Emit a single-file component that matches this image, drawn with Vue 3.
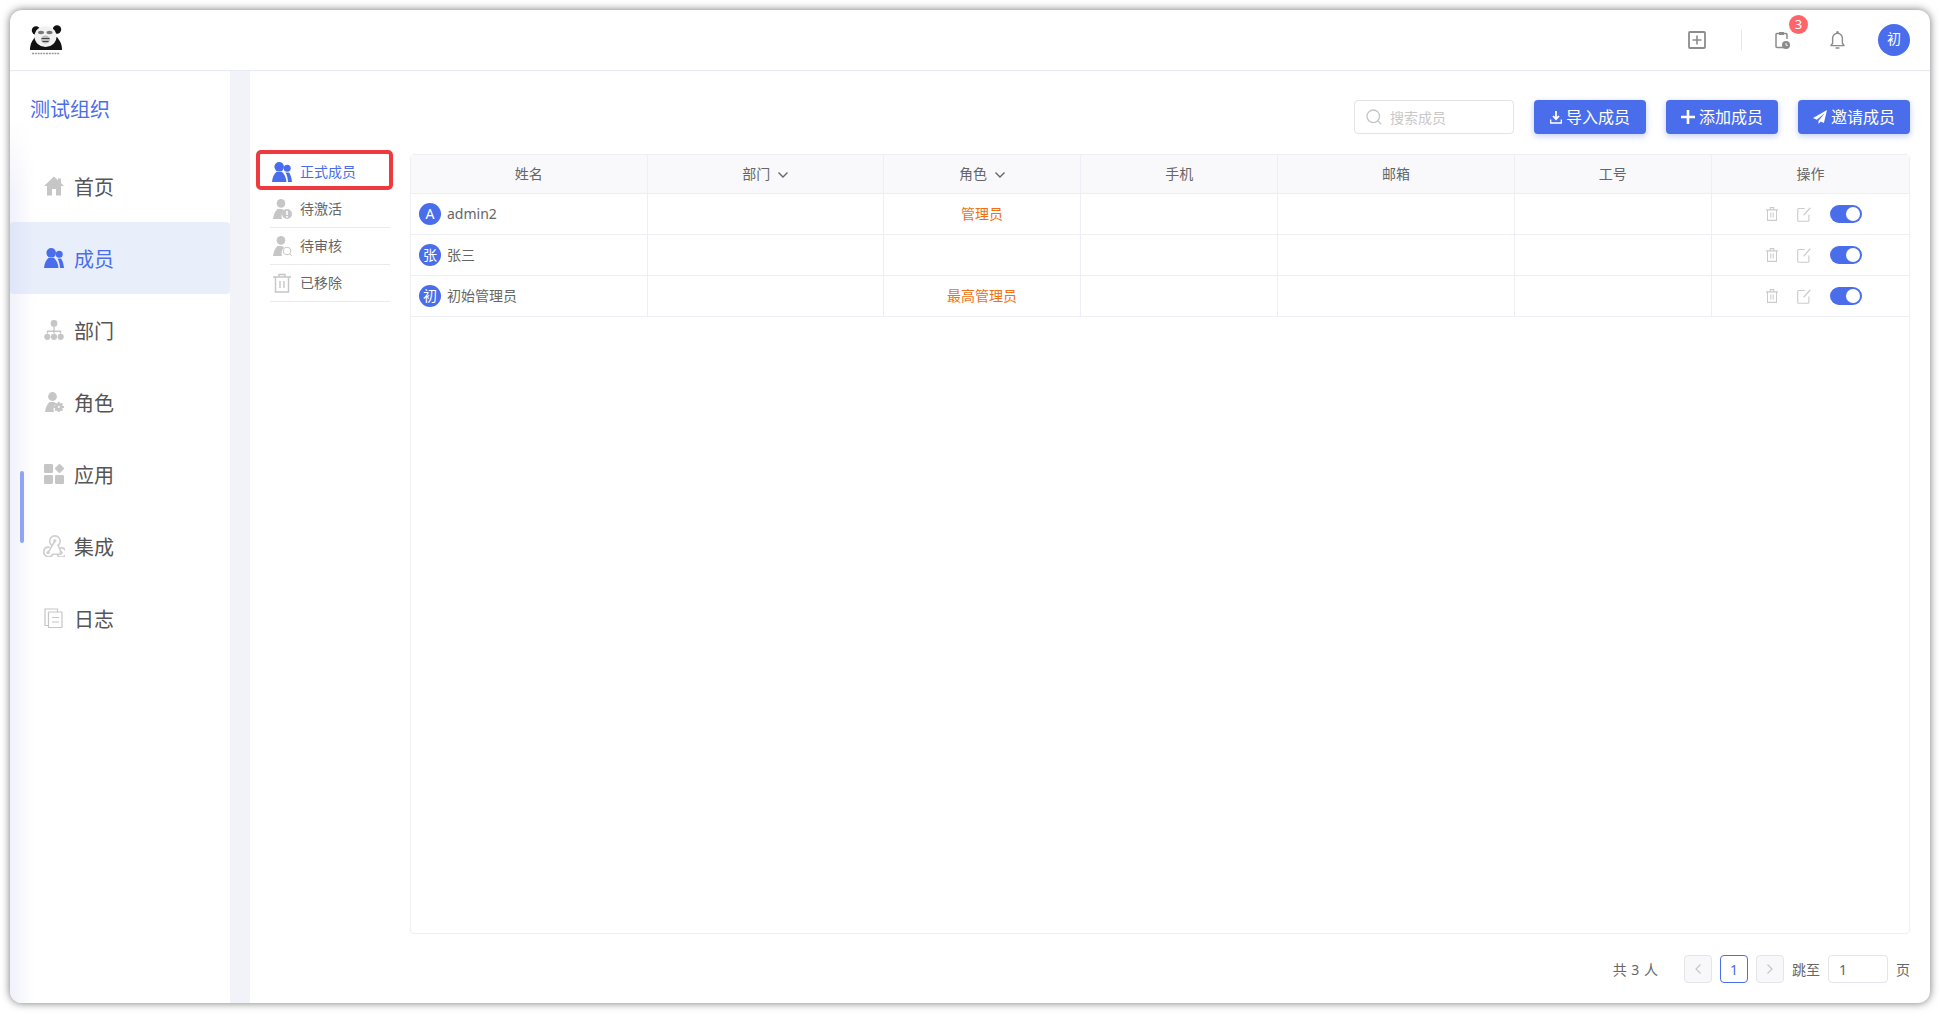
<script setup>
const person = 'M1 20C1.500 15.500 3 12.500 5.500 10h4.500c.8.5 1.500 1 2 1.500-2.300 2-3 5.800-2 8.500z'
const icons = {
  home: '<path d="M10 .5 0 10h3v9.500h5V13h4v6.500h5V10h3l-3-2.900V2.500h-3v1.700z"/>',
  people: '<circle cx="7.200" cy="4.800" r="4.800"/><path d="M0 20C.4 15.500 2 12 4.500 9.800h5.400c2.500 2.200 4.200 5.700 4.600 10.200z"/><circle cx="15.200" cy="6.200" r="3.500"/><path d="M13.500 10.500h3.600c1.600 2.300 2.600 5.700 2.900 9.500h-4c-.2-3.600-1-7-2.500-9.500z"/>',
  org: '<circle cx="10" cy="3.400" r="3.400"/><path d="M9.300 6.500h1.400v4h6.500v3h-1.400v-1.600h-5.100v1.600H9.300v-1.600H4.200v1.600H2.800v-3h6.500z"/><circle cx="3.300" cy="16.800" r="3.100"/><circle cx="10" cy="16.800" r="3.100"/><circle cx="16.700" cy="16.800" r="3.100"/>',
  role: '<circle cx="8.500" cy="4.500" r="4.400"/><path d="' + person + '"/><circle cx="14.800" cy="15" r="3.900"/><g stroke="currentColor" stroke-width="2"><path d="M14.800 9.800v10.400M9.600 15h10.400M11.200 11.400l7.200 7.200M18.400 11.400l-7.200 7.200"/></g><circle cx="14.800" cy="15" r="1" fill="#fff"/>',
  apps: '<rect x="0" y="0" width="9" height="9" rx="1.200"/><rect x="12" y="1" width="7" height="7" rx="1" transform="rotate(45 15.500 4.500)"/><rect x="0" y="11" width="9" height="9" rx="1.200"/><rect x="11" y="11" width="9" height="9" rx="1.200"/>',
  hook: '<g fill="none" stroke="currentColor" stroke-width="1.500" stroke-linecap="round"><path d="M7.800 9.300A4.800 4.800 0 1 1 13.800 9.300"/><path d="M10.800 5.300 4.600 16"/><path d="M5.500 11A4.400 4.400 0 1 0 8.900 17.500H16.500"/><path d="M13.500 18.600A4.200 4.200 0 1 0 16 11.800"/><path d="M13.800 9.300 16.500 16"/></g><circle cx="10.800" cy="5.300" r="1.500"/><circle cx="4.600" cy="16" r="1.500"/><circle cx="16.500" cy="16" r="1.500"/>',
  log: '<g fill="none" stroke="currentColor" stroke-width="1.200"><path d="M4.500 17.500H1V1h12.500v3"/><rect x="4.500" y="4" width="13.500" height="15.500" rx=".6"/><path d="M8 9.500h7M8 14h7"/></g>',
  pending: '<circle cx="9" cy="4.400" r="4.300"/><path d="' + person + '"/><circle cx="15" cy="15" r="5"/><rect x="14.200" y="11.800" width="1.600" height="4.200" fill="#fff"/><rect x="14.200" y="17" width="1.600" height="1.600" fill="#fff"/>',
  review: '<circle cx="9" cy="4.400" r="4.300"/><path d="' + person + '"/><g fill="none" stroke="currentColor" stroke-width="1"><circle cx="15" cy="15" r="3.800"/><path d="m18 18 2 2"/></g>',
  trash: '<g fill="none" stroke="currentColor" stroke-width="1.400"><path d="M1 4h18M7 4V1.500h6V4M3.500 4v15h13V4"/><path d="M8 8v7M12 8v7"/></g>',
  optrash: '<g fill="none" stroke="currentColor" stroke-width="1.700"><path d="M0 4h20M7 4V1h6v3M2.500 4v15h15V4"/><path d="M8 8v7M12 8v7"/></g>',
  edit: '<g fill="none" stroke="currentColor" stroke-width="1.600"><path d="M11 2H2.500A1.500 1.500 0 0 0 1 3.500v14A1.500 1.500 0 0 0 2.500 19h13a1.500 1.500 0 0 0 1.500-1.500V10"/><path d="M19 1 9.500 11"/></g>'
}
const navs = [
  { icon: 'home', label: '首页' },
  { icon: 'people', label: '成员', active: true },
  { icon: 'org', label: '部门' },
  { icon: 'role', label: '角色' },
  { icon: 'apps', label: '应用' },
  { icon: 'hook', label: '集成' },
  { icon: 'log', label: '日志' }
]
const subs = [
  { icon: 'people', label: '正式成员', active: true },
  { icon: 'pending', label: '待激活' },
  { icon: 'review', label: '待审核' },
  { icon: 'trash', label: '已移除' }
]
const cols = [
  { label: '姓名' },
  { label: '部门', arrow: true },
  { label: '角色', arrow: true },
  { label: '手机' },
  { label: '邮箱' },
  { label: '工号' },
  { label: '操作' }
]
const rows = [
  { mark: 'A', name: 'admin2', role: '管理员' },
  { mark: '张', name: '张三', role: '' },
  { mark: '初', name: '初始管理员', role: '最高管理员' }
]
</script>

<template>
  <div class="page">
    <div class="window">
      <header class="topbar">
        <svg class="logo" viewBox="0 0 32 32" width="32" height="32">
          <circle cx="6" cy="6.500" r="4.200" fill="#111" />
          <circle cx="27" cy="5.500" r="4.200" fill="#111" />
          <path d="M0 26c0-6 2-9 5-13h22c3 4 5 7 5 13z" fill="#111" />
          <ellipse cx="15.500" cy="12.500" rx="11" ry="10.500" fill="#f1f1f1" />
          <ellipse cx="11" cy="8.500" rx="3" ry="1.700" fill="#777" />
          <ellipse cx="19.500" cy="8.500" rx="3" ry="1.700" fill="#777" />
          <ellipse cx="15.500" cy="15.500" rx="4.500" ry="4" fill="#bbb" />
          <path d="M11.500 14.500h8M12.500 17.500h6" stroke="#444" stroke-width="1" />
          <path d="M2 29.500h28" stroke="#999" stroke-width="1.600" stroke-dasharray="2 .8" />
        </svg>
        <div class="tools">
          <svg class="tool-plus" viewBox="0 0 18 18" width="18" height="18">
            <rect x="1" y="1" width="16" height="16" rx="1" fill="none" stroke="#8c8c8c" stroke-width="1.800" />
            <path d="M9 4.500v9M4.500 9h9" stroke="#8c8c8c" stroke-width="1.600" />
          </svg>
          <span class="tool-divider"></span>
          <span class="tool-task">
            <svg viewBox="0 0 15 18" width="15" height="18">
              <path d="M9 16.500H2A1 1 0 0 1 1 15.500V3.500a1 1 0 0 1 1-1h9a1 1 0 0 1 1 1V8" fill="none" stroke="#8c8c8c" stroke-width="1.500" />
              <rect x="4" y="1" width="5" height="3" fill="#8c8c8c" />
              <circle cx="11" cy="14" r="4" fill="#8c8c8c" />
              <path d="M11 12v2.300h1.800" fill="none" stroke="#fff" stroke-width=".9" />
            </svg>
            <span class="badge">3</span>
          </span>
          <svg class="tool-bell" viewBox="0 0 16 20" width="15" height="20">
            <path d="M1 16h14l-1.800-2.500V8A5.200 5.200 0 0 0 2.800 8v5.500z" fill="none" stroke="#8c8c8c" stroke-width="1.500" stroke-linejoin="round" />
            <circle cx="8" cy="1.800" r="1.300" fill="#8c8c8c" />
            <path d="M6 18.500h4" stroke="#8c8c8c" stroke-width="1.600" />
          </svg>
          <span class="avatar-top">初</span>
        </div>
      </header>

      <div class="frame">
        <aside class="sidebar">
          <div class="org">测试组织</div>
          <nav>
            <a v-for="n in navs" :key="n.label" class="nav-item" :class="{ on: n.active }">
              <svg class="nav-icon" :class="{ wide: n.icon === 'hook' }" viewBox="0 0 20 20" width="20" height="20" fill="currentColor" v-html="icons[n.icon]"></svg>
              <span>{{ n.label }}</span>
            </a>
          </nav>
          <span class="scroll-thumb"></span>
        </aside>
        <div class="band"></div>
        <main class="main">
          <div class="toolbar">
            <label class="search">
              <svg viewBox="0 0 16 16" width="16" height="16">
                <circle cx="7.300" cy="7.300" r="6.300" fill="none" stroke="#c4c4c4" stroke-width="1.300" />
                <path d="m12 12 3 3" stroke="#c4c4c4" stroke-width="1.300" />
              </svg>
              <input placeholder="搜索成员" />
            </label>
            <button class="btn">
              <svg viewBox="0 0 12 14" width="12" height="14">
                <path d="M6 1v7.500M3 6l3 3.200L9 6" fill="none" stroke="#fff" stroke-width="1.800" />
                <path d="M.7 9.500v3.500h10.600V9.500" fill="none" stroke="#fff" stroke-width="1.300" />
              </svg>
              <span class="lift">导入成员</span>
            </button>
            <button class="btn">
              <svg viewBox="0 0 14 14" width="14" height="14">
                <path d="M7 0v14M0 7h14" stroke="#fff" stroke-width="2.600" />
              </svg>
              <span class="lift">添加成员</span>
            </button>
            <button class="btn">
              <svg viewBox="0 0 14 14" width="14" height="14">
                <path d="M14 0 0 8l3.800 1.800L12 3 5.500 10.800V14l2.400-2.600 3 1.500z" fill="#fff" />
              </svg>
              <span class="lift">邀请成员</span>
            </button>
          </div>

          <div class="body">
            <ul class="subnav">
              <li v-for="s in subs" :key="s.label" class="sub-item" :class="{ on: s.active }">
                <svg viewBox="0 0 20 20" width="20" height="20" fill="currentColor" v-html="icons[s.icon]"></svg>
                <span class="lift">{{ s.label }}</span>
              </li>
            </ul>
            <span class="mark-box"></span>

            <div class="table">
              <div class="tr th">
                <div v-for="c in cols" :key="c.label" class="cell center">
                  <span class="lift">{{ c.label }}</span>
                  <svg v-if="c.arrow" class="chev" viewBox="0 0 10 6" width="10" height="6">
                    <path d="m.5.500 4.500 4.500L9.500.500" fill="none" stroke="#666" stroke-width="1.400" />
                  </svg>
                </div>
              </div>
              <div v-for="r in rows" :key="r.name" class="tr">
                <div class="cell user">
                  <span class="avatar">{{ r.mark }}</span>
                  <span class="lift">{{ r.name }}</span>
                </div>
                <div class="cell"></div>
                <div class="cell center role"><span class="lift">{{ r.role }}</span></div>
                <div class="cell"></div>
                <div class="cell"></div>
                <div class="cell"></div>
                <div class="cell ops">
                  <svg class="op-trash" viewBox="0 0 20 20" width="12" height="14" preserveAspectRatio="none" v-html="icons.optrash"></svg>
                  <svg class="op-edit" viewBox="0 0 20 20" width="14" height="15" preserveAspectRatio="none" v-html="icons.edit"></svg>
                  <span class="switch"><i></i></span>
                </div>
              </div>
            </div>
          </div>

          <div class="pager">
            <span class="total">共 3 人</span>
            <span class="pg off">
              <svg viewBox="0 0 6 10" width="6" height="10"><path d="M5.500.500 1 5l4.500 4.500" fill="none" stroke="#c4c4c4" stroke-width="1.100" /></svg>
            </span>
            <span class="pg cur">1</span>
            <span class="pg off">
              <svg viewBox="0 0 6 10" width="6" height="10"><path d="M.5.500 5 5 .5 9.500" fill="none" stroke="#c4c4c4" stroke-width="1.100" /></svg>
            </span>
            <span class="jump">跳至</span>
            <input class="jump-input" value="1" />
            <span>页</span>
          </div>
        </main>
      </div>
    </div>
  </div>
</template>

<style>
html, body { margin: 0; background: #fff; overflow: hidden; }
</style>

<style scoped>
.page {
  box-sizing: border-box;
  width: 1940px;
  height: 1013px;
  padding: 10px;
  font-family: "Noto Sans", "Noto Sans CJK SC", sans-serif;
  color: #666;
  font-size: 14px;
}
.window {
  height: 100%;
  display: flex;
  flex-direction: column;
  background: #fff;
  border-radius: 12px;
  overflow: hidden;
  box-shadow: 0 0 9px rgba(0, 0, 0, .55);
}
.topbar {
  box-sizing: border-box;
  height: 60px;
  flex: none;
  display: flex;
  align-items: center;
  justify-content: space-between;
  padding: 0 20px;
  box-shadow: 0 1px 1px #e9ebf3;
  position: relative;
  z-index: 1;
}
.logo { display: block; }
.tools { display: flex; align-items: center; }
.tool-plus { display: block; }
.tool-divider { width: 1px; height: 20px; background: #e6e6e6; margin: 0 33px 0 35px; }
.tool-task { position: relative; display: block; width: 15px; height: 18px; }
.tool-task svg { display: block; }
.badge {
  position: absolute;
  left: 14px;
  top: -16px;
  width: 19px;
  height: 19px;
  border-radius: 50%;
  background: #ff6468;
  color: #fff;
  font-size: 13px;
  line-height: 18px;
  text-align: center;
}
.tool-bell { display: block; margin-left: 40px; }
.avatar-top {
  width: 32px;
  height: 32px;
  margin-left: 33px;
  border-radius: 50%;
  background: #4a6eeb;
  color: #fff;
  font-size: 14px;
  line-height: 30px;
  text-align: center;
}
.frame { flex: 1; display: flex; min-height: 0; }
.sidebar {
  position: relative;
  width: 220px;
  flex: none;
  background:
    linear-gradient(180deg, #fff 50px, rgba(255, 255, 255, 0) 130px),
    linear-gradient(90deg, #f0f1fa, #fff 24px);
}
.org {
  height: 80px;
  line-height: 80px;
  padding-left: 20px;
  font-size: 20px;
  color: #4a6eeb;
}
.nav-item {
  height: 72px;
  display: flex;
  align-items: center;
  gap: 10px;
  padding-left: 34px;
  font-size: 20px;
  color: #555;
  border-radius: 4px;
}
.nav-icon { color: #c6c6c6; display: block; flex: none; }
.nav-icon.wide { width: 22px; height: 22px; margin-left: -1px; margin-right: -1px; color: #cfcfcf; }
.nav-item.on {
  background: linear-gradient(90deg, #dfe5f9, #e9eefb 24px);
  color: #4a6eeb;
}
.nav-item.on .nav-icon { color: #4a6eeb; }
.scroll-thumb {
  position: absolute;
  left: 10px;
  top: 401px;
  width: 4px;
  height: 72px;
  border-radius: 2px;
  background: #8fa4f6;
}
.band { width: 20px; flex: none; background: #f2f3f9; }
.main {
  flex: 1;
  min-width: 0;
  display: flex;
  flex-direction: column;
  padding: 30px 20px 20px;
}
.lift { padding-bottom: 2px; }
.toolbar { display: flex; justify-content: flex-end; gap: 20px; flex: none; }
.search {
  box-sizing: border-box;
  width: 160px;
  height: 34px;
  display: flex;
  align-items: center;
  gap: 8px;
  padding: 0 11px;
  border: 1px solid #e2e2e9;
  border-radius: 4px;
}
.search svg { flex: none; }
.search input {
  width: 100%;
  min-width: 0;
  border: 0;
  outline: 0;
  padding: 0;
  font: inherit;
}
.search input::placeholder { color: #c8c8c8; opacity: 1; }
.btn {
  width: 112px;
  height: 34px;
  display: flex;
  align-items: center;
  justify-content: center;
  gap: 4px;
  padding: 0;
  border: 0;
  border-radius: 4px;
  background: #4a6eeb;
  color: #fff;
  font: inherit;
  font-size: 16px;
  box-shadow: 0 2px 6px rgba(74, 110, 235, .35);
}
.body {
  position: relative;
  flex: 1;
  min-height: 0;
  display: flex;
  gap: 20px;
  margin-top: 20px;
}
.subnav { width: 120px; flex: none; margin: 0; padding: 0; list-style: none; }
.sub-item {
  box-sizing: border-box;
  height: 37px;
  display: flex;
  align-items: center;
  gap: 8px;
  padding-left: 2px;
  border-bottom: 1px solid #e8e8ed;
  color: #666;
}
.sub-item svg { color: #c6c6c6; display: block; }
.sub-item.on { color: #4a6eeb; border-bottom-color: transparent; }
.sub-item.on svg { color: #4a6eeb; }
.mark-box {
  position: absolute;
  left: -14px;
  top: -4px;
  width: 137px;
  height: 40px;
  box-sizing: border-box;
  border: 4px solid #ee3a3f;
  border-radius: 5px;
}
.table {
  flex: 1;
  min-width: 0;
  border: 1px solid #eeeff6;
  border-radius: 4px;
}
.tr {
  display: grid;
  grid-template-columns: 6fr 6fr 5fr 5fr 6fr 5fr 5fr;
  height: 41px;
  box-sizing: border-box;
  border-bottom: 1px solid #eeeff6;
}
.th { height: 39px; background: #f9f9fc; }
.cell {
  min-width: 0;
  display: flex;
  align-items: center;
  border-right: 1px solid #eeeff6;
}
.cell:last-child { border-right: 0; }
.center { justify-content: center; }
.chev { margin-left: 8px; margin-top: 1px; }
.user { padding-left: 8px; gap: 6px; }
.avatar {
  width: 22px;
  height: 22px;
  border-radius: 50%;
  background: #4a6eeb;
  color: #fff;
  line-height: 21px;
  text-align: center;
}
.role { color: #f07013; }
.ops { justify-content: flex-end; padding-right: 47px; color: #cbcbcb; }
.op-trash { display: block; }
.op-edit { display: block; margin-left: 19px; }
.switch {
  position: relative;
  width: 32px;
  height: 18px;
  margin-left: 19px;
  border-radius: 9px;
  background: #4a6eeb;
}
.switch i {
  position: absolute;
  right: 2px;
  top: 2px;
  width: 14px;
  height: 14px;
  border-radius: 50%;
  background: #fff;
}
.pager {
  flex: none;
  display: flex;
  justify-content: flex-end;
  align-items: center;
  height: 28px;
  margin-top: 21px;
}
.total { margin-right: 26px; word-spacing: 1px; }
.pg {
  box-sizing: border-box;
  width: 28px;
  height: 28px;
  margin-right: 8px;
  display: flex;
  align-items: center;
  justify-content: center;
  border: 1px solid #e4e4eb;
  border-radius: 4px;
}
.pg.off { background: #f8f8fb; }
.pg.cur { border-color: #4a6eeb; color: #4a6eeb; }
.jump-input {
  box-sizing: border-box;
  width: 60px;
  height: 28px;
  margin: 0 8px;
  padding: 0 10px;
  border: 1px solid #e4e4eb;
  border-radius: 4px;
  outline: 0;
  font: inherit;
  color: #666;
}
</style>
